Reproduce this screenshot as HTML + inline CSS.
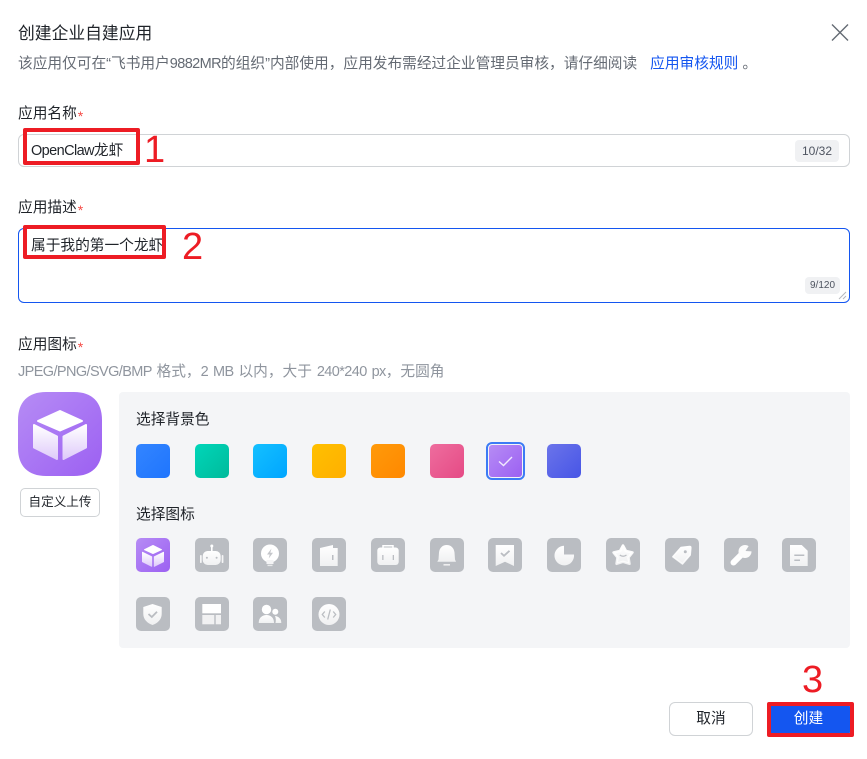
<!DOCTYPE html>
<html lang="zh"><head><meta charset="utf-8"><style>
html,body{margin:0;padding:0;background:#fff}
body{width:867px;height:759px;position:relative;overflow:hidden;font-family:"Liberation Sans","Noto Sans CJK SC",sans-serif;color:#1f2329}
.t{position:absolute;white-space:nowrap;font-size:14.7px;line-height:20px}
.l{font-size:14.5px;letter-spacing:-.6px}
.s{color:#f54a45;font-size:14px;position:relative;top:3px;margin-left:1px}
.box{position:absolute;box-sizing:border-box;background:#fff}
.c{position:absolute;background:#f0f1f3;border-radius:4px;color:#4e5460;text-align:center}
.sw{position:absolute;top:444px;width:33.5px;height:34px;border-radius:5px}
.ic{position:absolute;width:34px;height:34px;border-radius:5px;background:#babdc2}
.ic svg{display:block;width:34px;height:34px}
.red{position:absolute;box-sizing:border-box;border:4px solid #ed1c24;border-radius:2px}
.n{position:absolute;color:#ed1c24;font-size:38px;line-height:44px}
</style></head><body>
<svg width="0" height="0" style="position:absolute"><defs>
<linearGradient id="w" x1="0" y1="0" x2="0" y2="1"><stop offset="0" stop-color="#fff"/><stop offset="1" stop-color="#fff" stop-opacity=".78"/></linearGradient>
<linearGradient id="p" x1="0" y1="0" x2="1" y2="1"><stop offset="0" stop-color="#b68cf5"/><stop offset="1" stop-color="#9c60f2"/></linearGradient>
<linearGradient id="pw" x1="0" y1="0" x2="0" y2="1"><stop offset="0" stop-color="#fff"/><stop offset="1" stop-color="#dfcbfa"/></linearGradient>
</defs></svg>

<div class="t" style="left:18px;top:23px;font-size:16.8px;line-height:22px">创建企业自建应用</div>
<svg style="position:absolute;left:830px;top:23px" width="19" height="19" viewBox="0 0 19 19"><path d="M2 1.500L18 17.500M18 1.500L2 17.500" stroke="#646a73" stroke-width="1.400" fill="none"/></svg>
<div class="t" style="left:18px;top:54px;color:#646a73">该应用仅可在“飞书用户<span class="l">9882MR</span>的组织”内部使用，应用发布需经过企业管理员审核，请仔细阅读<span style="color:#1456f0;margin-left:13px">应用审核规则</span>&nbsp;。</div>

<div class="t" style="left:18px;top:103px">应用名称<span class="s">*</span></div>
<div class="box" style="left:18px;top:134px;width:832px;height:33px;border:1px solid #d0d3d6;border-radius:6px"></div>
<div class="t" style="left:31px;top:141px"><span class="l">OpenClaw</span>龙虾</div>
<div class="c" style="left:795px;top:140px;width:44px;height:22px;font-size:12px;line-height:22px">10/32</div>

<div class="t" style="left:18px;top:197px">应用描述<span class="s">*</span></div>
<div class="box" style="left:18px;top:228px;width:832px;height:75px;border:1px solid #1456f0;border-radius:6px"></div>
<div class="t" style="left:31px;top:236px">属于我的第一个龙虾</div>
<div class="c" style="left:805px;top:277px;width:35px;height:17px;font-size:10px;line-height:17px">9/120</div>
<svg style="position:absolute;left:836px;top:289px" width="12" height="12"><path d="M3 10L10 3M7 10L10 7" stroke="#b5b8bd" stroke-width="1" fill="none"/></svg>

<div class="t" style="left:18px;top:334px">应用图标<span class="s">*</span></div>
<div class="t" style="left:18px;top:362px;color:#8f959e;word-spacing:1.500px"><span class="l">JPEG/PNG/SVG/BMP </span>格式，<span class="l">2 MB </span>以内，大于<span class="l"> 240*240 px</span>，无圆角</div>

<svg style="position:absolute;left:18px;top:392px" width="84" height="84" viewBox="0 0 84 84"><path d="M28 0H56C74 0 84 10 84 28V56C84 74 74 84 56 84H28C10 84 0 74 0 56V28C0 10 10 0 28 0Z" fill="url(#p)"/><path d="M42 19L64 29L42 38.500L20 29Z" fill="#fff" stroke="#fff" stroke-width="2" stroke-linejoin="round"/><path d="M16 33L39 44.500V67L16 55.500Z" fill="url(#pw)" stroke="url(#pw)" stroke-width="2" stroke-linejoin="round"/><path d="M68 33V55.500L45.500 67V44.500Z" fill="url(#pw)" stroke="url(#pw)" stroke-width="2" stroke-linejoin="round"/></svg>
<div class="box" style="left:20px;top:488px;width:80px;height:29px;border:1px solid #d0d3d6;border-radius:5px;font-size:12.600px;line-height:27px;text-align:center">自定义上传</div>

<div style="position:absolute;left:119px;top:392px;width:731px;height:256px;background:#f4f5f7;border-radius:4px"></div>
<div class="t" style="left:136px;top:410px">选择背景色</div>
<div class="sw" style="left:136px;background:linear-gradient(135deg,#3385ff,#1f75fe)"></div>
<div class="sw" style="left:195px;background:linear-gradient(135deg,#00d6b9,#00ba9b)"></div>
<div class="sw" style="left:253px;background:linear-gradient(135deg,#14c0ff,#00a5ff)"></div>
<div class="sw" style="left:312px;background:linear-gradient(135deg,#ffc000,#ffaf00)"></div>
<div class="sw" style="left:371px;background:linear-gradient(135deg,#ff9a0a,#ff8800)"></div>
<div class="sw" style="left:430px;background:linear-gradient(135deg,#ee6d9e,#e54a85)"></div>
<div style="position:absolute;left:486px;top:442px;width:39px;height:38px;box-sizing:border-box;border:2px solid #3c7bf5;border-radius:6px;padding:1px"><div style="width:33px;height:32px;border-radius:3px;background:linear-gradient(135deg,#b68cf5,#9c60f2)"></div></div>
<svg style="position:absolute;left:497px;top:454px" width="17" height="14"><path d="M2 7.500L6.500 11.500L15 3" stroke="#f2eafd" stroke-width="1.400" fill="none"/></svg>
<div class="sw" style="left:547px;background:linear-gradient(135deg,#6b74ea,#4755e6)"></div>

<div class="t" style="left:136px;top:505px">选择图标</div>

<div class="ic" style="left:136px;top:538px;background:linear-gradient(135deg,#b68cf5,#9c60f2)"><svg viewBox="0 0 34 34"><path d="M17 7.500L25.500 11.700L17 15.500L8.500 11.700Z" fill="#fff" stroke="#fff" stroke-linejoin="round"/><path d="M6.500 14.300L15.700 18.800V28.300L6.500 23.700Z" fill="url(#pw)" stroke="url(#pw)" stroke-linejoin="round"/><path d="M27.500 14.300V23.700L18.300 28.300V18.800Z" fill="url(#pw)" stroke="url(#pw)" stroke-linejoin="round"/></svg></div>

<div class="ic" style="left:195px;top:538px"><svg viewBox="0 0 34 34"><rect x="16" y="8" width="1.600" height="5" fill="#fff"/><circle cx="16.800" cy="8" r="1.500" fill="#fff"/><rect x="7.700" y="13" width="18" height="14" rx="5" fill="url(#w)"/><rect x="5" y="17" width="1.700" height="8" rx=".8" fill="#f5f5f6"/><rect x="26.700" y="17" width="1.700" height="8" rx=".8" fill="#f5f5f6"/><circle cx="11.900" cy="19.700" r="1" fill="#babdc2"/><circle cx="21.600" cy="19.700" r="1" fill="#babdc2"/></svg></div>

<div class="ic" style="left:253px;top:538px"><svg viewBox="0 0 34 34"><circle cx="17" cy="15.500" r="9" fill="#fff"/><path d="M13.500 22h7v4h-7z" fill="#f4f4f5"/><rect x="14.500" y="26.700" width="5" height="1.400" fill="#e8e9ea"/><path d="M18.500 10.500L14 16.500h2.700l-1 4L20 14.700h-2.700z" fill="#c4c6ca"/></svg></div>

<div class="ic" style="left:312px;top:538px"><svg viewBox="0 0 34 34"><path d="M8 10L21 7V10H25.700V28H8Z" fill="url(#w)"/><rect x="20" y="17" width="1.500" height="5" fill="#babdc2"/></svg></div>

<div class="ic" style="left:371px;top:538px"><svg viewBox="0 0 34 34"><path d="M12 10V7.800H22V10" stroke="#fff" stroke-width="1.500" fill="none"/><rect x="6.300" y="9.500" width="21.400" height="17.500" rx="3" fill="url(#w)"/><rect x="11.200" y="17" width="1.300" height="5" fill="#babdc2"/><rect x="21.700" y="17" width="1.300" height="5" fill="#babdc2"/></svg></div>

<div class="ic" style="left:430px;top:538px"><svg viewBox="0 0 34 34"><path d="M16.700 7C21 7 24 10 24.500 14.500L25 21.500L26 23.700H7.300L8.500 21.500L9 14.500C9.500 10 12.500 7 16.700 7Z" fill="url(#w)"/><rect x="13.500" y="26" width="6.500" height="1.600" fill="#eeeeef"/></svg></div>

<div class="ic" style="left:488px;top:538px"><svg viewBox="0 0 34 34"><path d="M7.700 7H26V28L17 23.700L7.700 28Z" fill="url(#w)"/><path d="M13 15L16 17.800L21.500 12.800" stroke="#babdc2" stroke-width="1.800" fill="none"/></svg></div>

<div class="ic" style="left:547px;top:538px"><svg viewBox="0 0 34 34"><path d="M17 7.800V16.500H27A9.800 9.800 0 1 1 17 7.800Z" fill="url(#w)"/></svg></div>

<div class="ic" style="left:606px;top:538px"><svg viewBox="0 0 34 34"><path d="M17 7.500L20 13L26.500 14.500L22.500 19.500L23.500 25.800L17 23.800L10.500 25.800L11.500 19.500L7.500 14.500L14 13Z" fill="url(#w)" stroke="url(#w)" stroke-width="2.500" stroke-linejoin="round"/><path d="M13.800 17Q17 19.500 20.500 17" stroke="#babdc2" stroke-width="1.200" fill="none"/></svg></div>

<div class="ic" style="left:665px;top:538px"><svg viewBox="0 0 34 34"><path d="M16 9.500L24.500 8.500Q26 8.300 25.800 10L25.200 17L17.500 26L7.800 18.800Z" fill="url(#w)" stroke="url(#w)" stroke-width="1.500" stroke-linejoin="round"/><circle cx="20.300" cy="13.700" r="1.500" fill="#babdc2"/></svg></div>

<div class="ic" style="left:724px;top:538px"><svg viewBox="0 0 34 34"><path d="M9.500 24.500L19 15" stroke="#fff" stroke-width="6" stroke-linecap="round" fill="none"/><circle cx="21" cy="13.500" r="6.500" fill="#fbfbfb"/><path d="M21.500 13L26 6L30 8V13.500Z" fill="#babdc2"/></svg></div>

<div class="ic" style="left:782px;top:538px"><svg viewBox="0 0 34 34"><path d="M8 7H19.700L25.700 12.700V28H8Z" fill="url(#w)"/><rect x="12.300" y="16.500" width="10" height="1.500" fill="#babdc2"/><rect x="12.300" y="21.500" width="5.700" height="1.500" fill="#babdc2"/></svg></div>

<div class="ic" style="left:136px;top:597px"><svg viewBox="0 0 34 34"><path d="M16.500 7L25.700 10V17C25.700 22.500 21.500 26.300 16.500 28C11.500 26.300 7.300 22.500 7.300 17V10Z" fill="url(#w)"/><path d="M12.500 17L15.800 20L21 14.700" stroke="#babdc2" stroke-width="1.800" fill="none"/></svg></div>

<div class="ic" style="left:195px;top:597px"><svg viewBox="0 0 34 34"><rect x="7.300" y="7" width="18.700" height="9.300" fill="#fff"/><rect x="7.300" y="18" width="12" height="9.300" fill="#f1f1f2"/><rect x="20.700" y="18" width="5.300" height="9.300" fill="#f1f1f2"/></svg></div>

<div class="ic" style="left:253px;top:597px"><svg viewBox="0 0 34 34"><circle cx="13.500" cy="12.500" r="4.700" fill="#fff"/><path d="M5.700 26C5.700 20.500 9.500 18 13.500 18C17.500 18 21 20.500 21 26Z" fill="url(#w)"/><circle cx="22.300" cy="14.700" r="3" fill="#fff"/><path d="M22.500 26H28.300C28.300 22 26 19.500 22 19C23 21 23 23.500 22.500 26Z" fill="url(#w)"/></svg></div>

<div class="ic" style="left:312px;top:597px"><svg viewBox="0 0 34 34"><circle cx="17" cy="17.500" r="10.500" fill="url(#w)"/><path d="M12.800 14.500L10.300 17.500L12.800 20.500M21.200 14.500L23.700 17.500L21.200 20.500M18.300 12.500L15.700 22.500" stroke="#babdc2" stroke-width="1.300" fill="none"/></svg></div>

<div class="box" style="left:669px;top:702px;width:84px;height:34px;border:1px solid #d0d3d6;border-radius:6px;font-size:14.7px;line-height:33px;text-align:center">取消</div>
<div class="box" style="left:767px;top:703px;width:83px;height:33px;background:#1456f0;border-radius:4px;color:#fff;font-size:14.7px;line-height:33px;text-align:center">创建</div>

<div class="red" style="left:23px;top:128px;width:117px;height:37px"></div>
<div class="n" style="left:144px;top:128px">1</div>
<div class="red" style="left:23px;top:225px;width:143px;height:34px"></div>
<div class="n" style="left:182px;top:225px">2</div>
<div class="red" style="left:767px;top:702px;width:87px;height:35px"></div>
<div class="n" style="left:802px;top:658px">3</div>
</body></html>
